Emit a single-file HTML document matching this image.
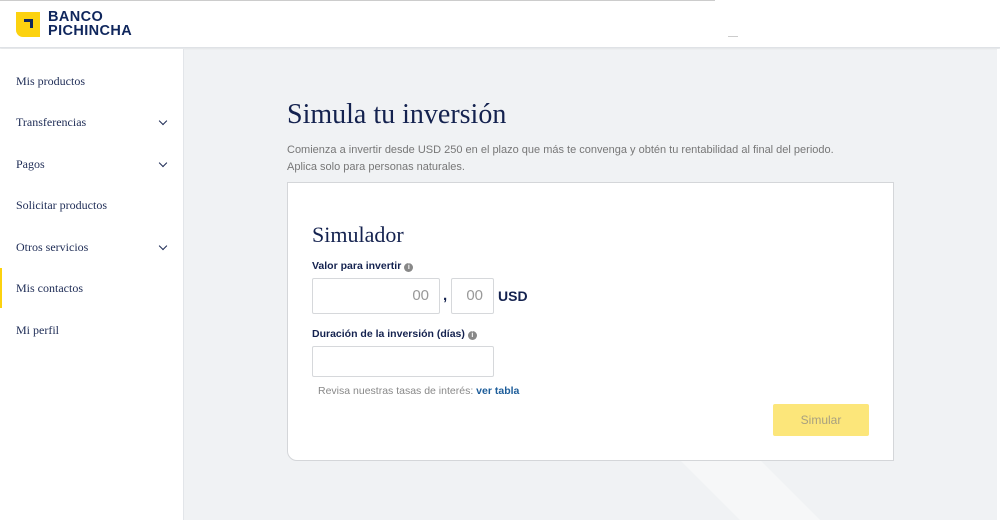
<!DOCTYPE html>
<html><head><meta charset="utf-8"><style>
*{margin:0;padding:0;box-sizing:border-box}
body{width:1000px;height:520px;overflow:hidden;background:#f0f2f4;font-family:"Liberation Sans",sans-serif;position:relative;color:#0f265c}
.hdr{position:absolute;left:0;top:0;width:1000px;height:48px;background:#fff;border-bottom:1px solid #dfe2e6;box-shadow:0 1px 2px rgba(0,0,0,.06)}
.topline{position:absolute;left:0;top:0;width:715px;height:1px;background:#ccc}
.logo{position:absolute;left:16px;top:12px;width:24px;height:25px;background:#fcd20f;border-radius:0 0 0 7px}
.logo i{position:absolute;left:8px;top:7px;width:9px;height:3px;background:#0f265c}
.logo b{position:absolute;left:14px;top:7px;width:3px;height:9px;background:#0f265c}
.brand{position:absolute;left:48px;top:11px;font-weight:bold;font-size:14.5px;line-height:13.5px;color:#0f265c;letter-spacing:.4px}
.side{position:absolute;left:0;top:49px;width:184px;height:471px;background:#fff;border-right:1px solid #e2e5e9}
.side div{position:absolute;left:16px;font-family:"Liberation Serif",serif;font-size:12px;color:#1d2b55}
.chev{position:absolute;left:160px;width:6px;height:6px;border-right:1.6px solid #1d2b55;border-bottom:1.6px solid #1d2b55;transform:rotate(45deg)}
.act{position:absolute;left:0;top:268px;width:2px;height:40px;background:#fcd20f}
h1{position:absolute;left:287px;top:99px;font-family:"Liberation Serif",serif;font-weight:normal;font-size:28px;color:#14224f}
.desc{position:absolute;left:287px;top:142px;font-size:11px;line-height:17px;color:#777}
.card{position:absolute;left:287px;top:182px;width:607px;height:279px;background:#fff;border:1px solid #d4d6d9;border-radius:0 0 0 10px}
.card h2{position:absolute;left:24px;top:39px;font-family:"Liberation Serif",serif;font-weight:normal;font-size:22px;color:#14224f}
.lbl{position:absolute;font-size:10.5px;font-weight:bold;color:#14224f}
.info{display:inline-block;width:9px;height:9px;border-radius:50%;background:#888;color:#fff;font-size:7px;text-align:center;line-height:9px;margin-left:3px;vertical-align:0}
.inp{position:absolute;border:1px solid #d6d8db;border-radius:2px;background:#fff;font-size:15px;color:#999;text-align:right;padding-right:10px;line-height:34px}
.btn{position:absolute;left:485px;top:221px;width:96px;height:32px;background:#fce67a;border-radius:2px;color:#a8a080;font-size:12px;text-align:center;line-height:32px}
</style></head><body>
<svg style="position:absolute;left:0;top:0" width="1000" height="520"><polygon points="680,460 760,460 820,520 740,520" fill="#f6f7f8"/></svg>
<div class="hdr"><div class="topline"></div><div style="position:absolute;left:728px;top:36px;width:10px;height:1px;background:#ccc"></div>
<div class="logo"><i></i><b></b></div>
<div class="brand">BANCO<br>PICHINCHA</div></div>
<div class="side">
<div style="top:25px">Mis productos</div>
<div style="top:66px">Transferencias</div><span class="chev" style="top:69px"></span>
<div style="top:108px">Pagos</div><span class="chev" style="top:111px"></span>
<div style="top:149px">Solicitar productos</div>
<div style="top:191px">Otros servicios</div><span class="chev" style="top:194px"></span>
<div style="top:232px">Mis contactos</div>
<div style="top:274px">Mi perfil</div>
</div>
<div class="act"></div>
<div style="position:absolute;left:997px;top:49px;width:3px;height:471px;background:#fff"></div>
<h1>Simula tu inversión</h1>
<div class="desc">Comienza a invertir desde USD 250 en el plazo que más te convenga y obtén tu rentabilidad al final del periodo.<br>Aplica solo para personas naturales.</div>
<div class="card">
<h2>Simulador</h2>
<div class="lbl" style="left:24px;top:77px">Valor para invertir<span class="info">i</span></div>
<div class="inp" style="left:24px;top:95px;width:128px;height:36px">00</div>
<div style="position:absolute;left:155px;top:104px;font-size:15px;font-weight:bold;color:#14224f">,</div>
<div class="inp" style="left:163px;top:95px;width:43px;height:36px">00</div>
<div style="position:absolute;left:210px;top:105px;font-size:14px;font-weight:bold;color:#14224f">USD</div>
<div class="lbl" style="left:24px;top:145px">Duración de la inversión (días)<span class="info">i</span></div>
<div class="inp" style="left:24px;top:163px;width:182px;height:31px"></div>
<div style="position:absolute;left:30px;top:202px;font-size:10.5px;color:#888">Revisa nuestras tasas de interés: <span style="color:#1d5d9a;font-weight:bold">ver tabla</span></div>
<div class="btn">Simular</div>
</div>
</body></html>
